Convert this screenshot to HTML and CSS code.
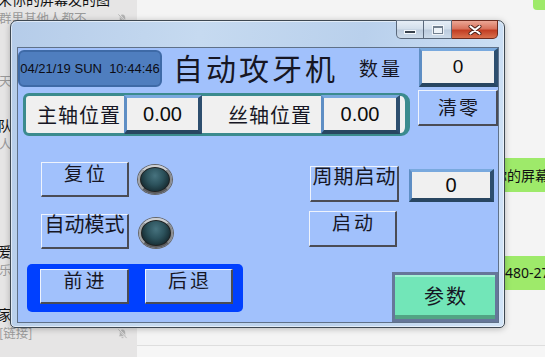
FILE: index.html
```html
<!DOCTYPE html>
<html lang="zh-CN">
<head>
    <meta charset="UTF-8">
    <title>自动攻牙机</title>
<link rel="stylesheet" href="styles.css">
</head>
<body>
<div class="desktop">

    <aside class="chat-list">
        <div class="chat-item">
            <div class="chat-name">宋你的屏幕发的图</div>
            <div class="chat-msg"><span>群里其他人都不</span><svg class="mute" viewBox="0 0 12 12"><path d="M6 1.5C4 1.5 3 3 3 5v2.5L2 9h8L9 7.5V5C9 3 8 1.5 6 1.5z" fill="#b4b4b4"/><path d="M5 10.5h2" stroke="#b4b4b4"/><path d="M1.5 1l9 10" stroke="#e6e5e5" stroke-width="2"/><path d="M1.5 1.5l9 9.5" stroke="#b4b4b4"/></svg></div>
        </div>
        <div class="chat-item">
            <div class="chat-name chat-name-late">交流群</div>
            <div class="chat-msg"><span>天：收到</span></div>
        </div>
        <div class="chat-item">
            <div class="chat-name">队长</div>
            <div class="chat-msg"><span>人：好</span></div>
        </div>
        <div class="chat-item">
            <div class="chat-name chat-name-late">项目</div>
            <div class="chat-msg chat-name-late"><span>再说</span></div>
        </div>
        <div class="chat-item">
            <div class="chat-name">爱好</div>
            <div class="chat-msg"><span>乐'：哈</span></div>
        </div>
        <div class="chat-item">
            <div class="chat-name">家人</div>
            <div class="chat-msg"><span>[链接]</span><svg class="mute" viewBox="0 0 12 12"><path d="M6 1.5C4 1.5 3 3 3 5v2.5L2 9h8L9 7.5V5C9 3 8 1.5 6 1.5z" fill="#b4b4b4"/><path d="M5 10.5h2" stroke="#b4b4b4"/><path d="M1.5 1l9 10" stroke="#e6e5e5" stroke-width="2"/><path d="M1.5 1.5l9 9.5" stroke="#b4b4b4"/></svg></div>
        </div>
    </aside>

    <section class="chat-pane">
        <div class="bubble bubble-top">好</div>
        <div class="bubble bubble-a">是你的屏幕吗</div>
        <div class="bubble bubble-b">13480-2756</div>
        <div class="input-area"></div>
    </section>

    <div class="window">
        <div class="titlebar">
            <div class="caption-btns">
                <span class="cap-btn cap-min"><i></i></span>
                <span class="cap-btn cap-max"><i></i></span>
                <span class="cap-btn cap-close">
                    <svg width="14" height="10" viewBox="0 0 14 10"><path d="M2.5 1.5l9 7M11.5 1.5l-9 7" stroke="#4a2018" stroke-width="4" stroke-linecap="round"/><path d="M2.5 1.5l9 7M11.5 1.5l-9 7" stroke="#fff" stroke-width="2.2" stroke-linecap="round"/></svg>
                </span>
            </div>
        </div>

        <div class="screen">
            <div class="row row-head">
                <div class="clock">04/21/19 SUN&nbsp;&nbsp;10:44:46</div>
                <h1 class="title">自动攻牙机</h1>
                <span class="qty-label">数量</span>
                <div class="field qty-field">0</div>
            </div>

            <div class="row row-pos">
                <div class="pos-panel">
                    <span class="pos-label">主轴位置</span>
                    <div class="field pos-field">0.00</div>
                    <span class="pos-label pos-label-2">丝轴位置</span>
                    <div class="field pos-field pos-field-2">0.00</div>
                </div>
                <div class="key key-clear">清零</div>
            </div>

            <div class="row row-cycle">
                <div class="key key-reset">复位</div>
                <div class="lamp"></div>
                <div class="key key-cycle">周期启动</div>
                <div class="field cycle-field">0</div>
            </div>

            <div class="row row-auto">
                <div class="key key-auto">自动模式</div>
                <div class="lamp lamp-auto"></div>
                <div class="key key-start">启动</div>
            </div>

            <div class="row row-bottom">
                <div class="jog-panel">
                    <div class="key key-jog">前进</div>
                    <div class="key key-jog key-back">后退</div>
                </div>
                <div class="key-param">参数</div>
            </div>
        </div>
    </div>

</div>
</body>
</html>
```

FILE: styles.css
```css
body {
    margin: 0;
    font-family: "Noto Sans CJK SC", "Noto Sans", sans-serif;
    overflow: hidden;
}

.desktop {
    position: relative;
    width: 545px;
    height: 357px;
    display: flex;
    overflow: hidden;
    background: #f4f4f4;
}

/* chat app behind the window */

.chat-list {
    width: 137px;
    flex: none;
    background: #e6e5e5;
    overflow: hidden;
}

.chat-item {
    height: 63px;
    padding: 8px 9px 0 0;
    box-sizing: border-box;
}

.chat-item:first-child {
    margin-top: -19px;
}

.chat-name {
    font-size: 14px;
    line-height: 20px;
    color: #111;
    white-space: nowrap;
    margin-left: -2px;
}

.chat-name-late {
    padding-left: 14px;
}

.chat-msg {
    display: flex;
    justify-content: space-between;
    align-items: center;
    font-size: 12.5px;
    line-height: 18px;
    color: #9a9a9a;
    white-space: nowrap;
    margin-left: -1px;
}

.mute {
    width: 11px;
    height: 11px;
}

.chat-pane {
    flex: 1;
    display: flex;
    flex-direction: column;
}

.bubble {
    align-self: flex-start;
    height: 34px;
    line-height: 34px;
    padding: 0 10px;
    background: #9eea6a;
    border-radius: 4px;
    font-size: 14px;
    color: #111;
    white-space: nowrap;
}

.bubble-top {
    margin: -24px 0 0 396px;
    width: 60px;
    color: transparent;
}

.bubble-a {
    margin: 148px 0 0 332px;
}

.bubble-b {
    margin: 64px 0 0 342px;
    font-family: "Noto Sans", sans-serif;
}

.input-area {
    margin-top: auto;
    height: 11px;
    border-top: 1px solid #dedede;
    background: #f6f6f6;
}

/* the HMI window */

.window {
    position: absolute;
    left: 10px;
    top: 20px;
    width: 495px;
    height: 308px;
    box-sizing: border-box;
    padding: 0 5px 4px 6px;
    border: 1px solid #3e4852;
    border-radius: 7px 7px 5px 5px;
    background: linear-gradient(100deg, #b5cce9 0%, #c6daf0 35%, #b9d0ec 65%, #d2e4f7 100%);
    box-shadow: inset 0 0 0 1px rgba(255, 255, 255, 0.55), 0 1px 6px rgba(0, 0, 0, 0.25);
}

.titlebar {
    height: 26px;
    display: flex;
    justify-content: flex-end;
    align-items: flex-start;
}

.caption-btns {
    display: flex;
    margin: -1px 1px 0 0;
}

.cap-btn {
    height: 19px;
    box-sizing: border-box;
    display: flex;
    align-items: center;
    justify-content: center;
    border: 1px solid #5a687b;
    border-top-color: #6f7c8c;
    background: linear-gradient(#e6eef7, #d2deeb 48%, #bccbdd 52%, #cddbea);
}

.cap-min {
    width: 28px;
    border-radius: 0 0 0 5px;
}

.cap-max {
    width: 28px;
    border-left: none;
}

.cap-close {
    width: 46px;
    border-left: none;
    border-radius: 0 0 5px 0;
    border-color: #6b2a1e;
    background: linear-gradient(#eba796, #d8735d 45%, #c23e24 55%, #d9704e);
}

.cap-min i {
    width: 10px;
    height: 2px;
    margin-top: 5px;
    background: #38414c;
    border: 1px solid #f4f8fc;
}

.cap-max i {
    width: 8px;
    height: 5px;
    border: 1px solid #73808f;
    border-top-width: 2px;
    background: #eef3f8;
    box-shadow: 0 0 0 1px rgba(255, 255, 255, 0.7);
}

.screen {
    height: 276px;
    box-sizing: border-box;
    border: 1px solid #5f7189;
    background: #a1c1fc;
    color: #161624;
}

.row {
    display: flex;
    align-items: flex-start;
}

.row-head {
    height: 42px;
}

.clock {
    width: 144px;
    height: 37px;
    margin-top: 2px;
    box-sizing: border-box;
    border: 2px solid #3e6aa7;
    border-radius: 6px;
    background: #4f7ebf;
    font-family: "Liberation Sans", Arial, sans-serif;
    font-size: 13px;
    line-height: 33px;
    text-align: center;
    color: #0c0c14;
    white-space: nowrap;
}

.title {
    width: 168px;
    height: 38px;
    margin: 0 0 0 11px;
    font-size: 30px;
    font-weight: normal;
    line-height: 38px;
    letter-spacing: 3px;
    white-space: nowrap;
}

.qty-label {
    margin: 8px 0 0 18px;
    font-size: 19px;
    line-height: 24px;
    letter-spacing: 3px;
}

.field {
    box-sizing: border-box;
    display: flex;
    align-items: center;
    justify-content: center;
    background: #f0f0f0;
    border-style: solid;
    border-width: 3px 4px 4px 3px;
    border-color: #79a9de #2d4e6e #284661 #5e8ec4;
    font-family: "Liberation Sans", Arial, sans-serif;
    font-size: 20px;
    color: #0c0c0c;
}

.qty-field {
    width: 79px;
    height: 39px;
    margin-left: 16px;
    font-size: 19px;
}

.row-pos {
    height: 46px;
}

.pos-panel {
    width: 387px;
    height: 43px;
    margin: 3px 0 0 5px;
    box-sizing: border-box;
    display: flex;
    align-items: center;
    padding-left: 11px;
    border: 3px solid #3b8b8e;
    border-right-width: 5px;
    border-radius: 6px 9px 9px 6px;
    background: #f0f0f0;
}

.pos-label {
    font-size: 20px;
    letter-spacing: 1px;
    white-space: nowrap;
}

.pos-field {
    flex: none;
    width: 78px;
    height: 39px;
    margin-left: 3px;
}

.pos-label-2 {
    margin-left: 26px;
}

.pos-field-2 {
    width: 79px;
    margin-left: 9px;
}

.key {
    box-sizing: border-box;
    border-style: solid;
    border-width: 1px 2px 2px 1px;
    border-color: #eef3fc #4a4c55 #4a4c55 #eef3fc;
    font-size: 19px;
    line-height: 18px;
    text-align: center;
    letter-spacing: 3px;
    padding-left: 3px;
    white-space: nowrap;
}

.key-clear {
    width: 80px;
    height: 36px;
    margin-left: 8px;
    line-height: 32px;
    letter-spacing: 2px;
}

.row-cycle {
    height: 44px;
    margin-top: 23px;
}

.key-reset {
    width: 88px;
    height: 35px;
    margin: 3px 0 0 23px;
    padding-top: 1px;
}

.lamp {
    width: 34px;
    height: 29px;
    margin: 6px 0 0 9px;
    box-sizing: border-box;
    border-radius: 50%;
    border: 2px solid;
    border-color: #cfcfcf #8c8c8c #5c5c5c #a4a4a4;
    background: radial-gradient(ellipse at 50% 35%, #47737f 0%, #2c525c 40%, #15292f 75%, #0c1a1e 100%);
    box-shadow: 0 0 0 1px #666, inset 0 0 0 1px #222;
}

.key-cycle {
    width: 89px;
    height: 36px;
    margin: 7px 0 0 138px;
    font-size: 20px;
    letter-spacing: 1px;
    padding-left: 1px;
}

.cycle-field {
    width: 85px;
    height: 33px;
    margin: 10px 0 0 10px;
}

.row-auto {
    height: 43px;
    margin-top: 5px;
}

.key-auto {
    width: 88px;
    height: 35px;
    margin: 6px 0 0 23px;
    font-size: 20px;
    letter-spacing: 0;
    padding-left: 0;
}

.lamp-auto {
    height: 30px;
    margin: 10px 0 0 10px;
}

.key-start {
    width: 88px;
    height: 36px;
    margin: 3px 0 0 136px;
    padding-top: 1px;
}

.row-bottom {
    height: 60px;
    margin-top: 12px;
}

.jog-panel {
    width: 216px;
    height: 48px;
    margin: 1px 0 0 9px;
    box-sizing: border-box;
    display: flex;
    align-items: flex-start;
    gap: 16px;
    padding: 5px 0 0 13px;
    background: #0040ff;
    border-radius: 5px;
}

.key-jog {
    width: 89px;
    height: 35px;
    background: #a1c1fc;
    padding-top: 1px;
}

.key-back {
    width: 88px;
}

.key-param {
    width: 106px;
    height: 50px;
    margin: 9px 0 0 149px;
    box-sizing: border-box;
    border: 3px solid #66779a;
    background: #72e6b8;
    box-shadow: inset 0 -4px 0 #52a484, inset 0 2px 0 #a4f4d6;
    font-size: 20px;
    line-height: 42px;
    text-align: center;
    letter-spacing: 2px;
    padding-left: 2px;
}
```
